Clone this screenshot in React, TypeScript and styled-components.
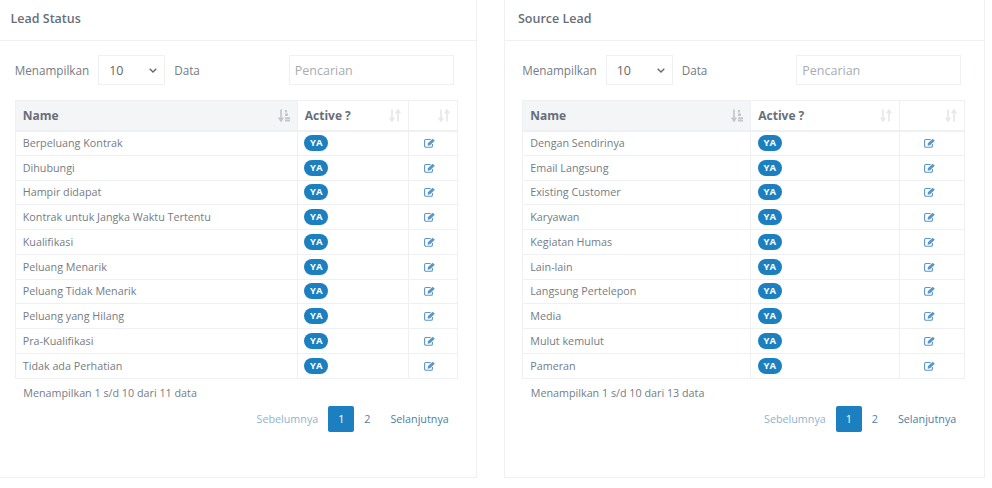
import { createGlobalStyle, styled } from 'styled-components';

const GlobalStyle = createGlobalStyle`
  html, body {
    margin: 0;
    padding: 0;
    background: #fff;
    overflow: hidden;
  }
  body {
    font-family: 'Open Sans', 'Liberation Sans', sans-serif;
    color: #757c84;
  }
`;

type Panel = {
  title: string;
  total: number;
  cols: [number, number, number];
  rows: string[];
};

const panels: Panel[] = [
  {
    title: 'Lead Status',
    total: 11,
    cols: [282, 111, 49],
    rows: [
      'Berpeluang Kontrak',
      'Dihubungi',
      'Hampir didapat',
      'Kontrak untuk Jangka Waktu Tertentu',
      'Kualifikasi',
      'Peluang Menarik',
      'Peluang Tidak Menarik',
      'Peluang yang Hilang',
      'Pra-Kualifikasi',
      'Tidak ada Perhatian',
    ],
  },
  {
    title: 'Source Lead',
    total: 13,
    cols: [228, 149, 65],
    rows: [
      'Dengan Sendirinya',
      'Email Langsung',
      'Existing Customer',
      'Karyawan',
      'Kegiatan Humas',
      'Lain-lain',
      'Langsung Pertelepon',
      'Media',
      'Mulut kemulut',
      'Pameran',
    ],
  },
];

const SortBoth = () => (
  <SortSvg viewBox="0 0 12 13" $muted>
    <path d="M3 .5v10.5M.8 8.6L3 12l2.2-3.4" fill="none" stroke="currentColor" strokeWidth="1.7" />
    <path d="M9 12.5V2M6.8 4.4L9 1l2.2 3.4" fill="none" stroke="currentColor" strokeWidth="1.7" />
  </SortSvg>
);

const SortAsc = () => (
  <SortSvg viewBox="0 0 12 13">
    <path d="M3 .5v10.5M.8 8.6L3 12l2.2-3.4" fill="none" stroke="currentColor" strokeWidth="1.7" />
    <path d="M7 1h2v2.4H7zM7 4.6h3v2.4H7zM7 8.2h5v1.9H7zM7 10.6h5v2H7z" fill="currentColor" />
  </SortSvg>
);

const EditIcon = () => (
  <svg width="12" height="10" viewBox="0 0 12 10">
    <path
      d="M8.4 6v1.9c0 .7-.5 1.3-1.3 1.3H2c-.8 0-1.4-.6-1.4-1.3V2.8c0-.7.6-1.3 1.4-1.3h4.6"
      fill="none"
      stroke="currentColor"
      strokeWidth="1.1"
    />
    <path d="M3.8 5.2L8.7.8l2.1 1.9-4.7 4.6-2.4.4z" fill="currentColor" />
  </svg>
);

const LeadTable = ({ panel }: { panel: Panel }) => (
  <Card>
    <CardHeader>{panel.title}</CardHeader>
    <CardBody>
      <Controls>
        <Length>
          Menampilkan
          <SelectBox>
            10
            <svg width="8" height="5" viewBox="0 0 8 5">
              <path d="M.7.7L4 4l3.3-3.3" fill="none" stroke="#666" strokeWidth="1.3" />
            </svg>
          </SelectBox>
          Data
        </Length>
        <SearchBox>Pencarian</SearchBox>
      </Controls>
      <Table>
        <thead>
          <tr>
            <NameHead $width={panel.cols[0]}>
              <HeadInner>
                Name
                <SortAsc />
              </HeadInner>
            </NameHead>
            <HeadCell $width={panel.cols[1]}>
              <HeadInner>
                Active ?
                <SortBoth />
              </HeadInner>
            </HeadCell>
            <HeadCell $width={panel.cols[2]}>
              <HeadInner>
                <span />
                <SortBoth />
              </HeadInner>
            </HeadCell>
          </tr>
        </thead>
        <tbody>
          {panel.rows.map(name => (
            <tr key={name}>
              <BodyCell>{name}</BodyCell>
              <BadgeCell>
                <Badge>YA</Badge>
              </BadgeCell>
              <ActionCell>
                <EditIcon />
              </ActionCell>
            </tr>
          ))}
        </tbody>
      </Table>
      <Info>Menampilkan 1 s/d 10 dari {panel.total} data</Info>
      <Pagination>
        <PageLink $disabled>Sebelumnya</PageLink>
        <PageCurrent>1</PageCurrent>
        <PageNumber>2</PageNumber>
        <PageLink>Selanjutnya</PageLink>
      </Pagination>
    </CardBody>
  </Card>
);

const App = () => (
  <>
    <GlobalStyle />
    <Page>
      {panels.map(panel => (
        <LeadTable key={panel.title} panel={panel} />
      ))}
    </Page>
  </>
);

export default App;

const Page = styled.div`
  display: grid;
  grid-template-columns: 480px 481px;
  gap: 27.5px;
  width: 992px;
  height: 488px;
  margin: -1px 0 0 -3.5px;
`;

const Card = styled.section`
  height: 479px;
  box-sizing: border-box;
  border: 1px solid #eef0f3;
  background: #fff;
`;

const CardHeader = styled.h2`
  margin: 0;
  height: 41px;
  box-sizing: border-box;
  padding: 10px 0 0 13px;
  border-bottom: 1px solid #eef0f3;
  font-size: 12.5px;
  line-height: 18px;
  font-weight: 600;
  color: #686f77;
`;

const CardBody = styled.div`
  padding: 14px 17.25px 0;
`;

const Controls = styled.div`
  display: flex;
  justify-content: space-between;
  box-sizing: border-box;
  width: 443px;
  height: 45px;
  padding-right: 4px;
`;

const Length = styled.div`
  display: flex;
  align-items: center;
  gap: 9px;
  height: 30px;
  font-size: 11.7px;
`;

const SelectBox = styled.div`
  display: flex;
  align-items: center;
  justify-content: space-between;
  width: 67px;
  height: 30px;
  box-sizing: border-box;
  padding: 0 7px 0 10px;
  border: 1px solid #eef0f3;
  font-size: 12.5px;
  color: #666;
`;

const SearchBox = styled.div`
  display: flex;
  align-items: center;
  width: 165px;
  height: 30px;
  box-sizing: border-box;
  padding-left: 5px;
  border: 1px solid #eef0f3;
  font-size: 12.5px;
  color: #a8acb1;
`;

const Table = styled.table`
  width: 442px;
  border-collapse: collapse;
  table-layout: fixed;
  font-size: 10.75px;
`;

const HeadCell = styled.th<{ $width: number }>`
  width: ${({ $width }) => $width}px;
  height: 30px;
  box-sizing: border-box;
  padding: 0 7px;
  border: 1px solid #eef0f3;
  border-bottom-width: 2px;
  text-align: left;
  font-size: 12px;
  font-weight: 700;
  color: #686f77;
`;

const NameHead = styled(HeadCell)`
  background: #f4f5f7;
`;

const HeadInner = styled.div`
  display: flex;
  align-items: center;
  justify-content: space-between;
`;

const SortSvg = styled.svg<{ $muted?: boolean }>`
  flex: none;
  width: 12px;
  height: 13px;
  color: ${({ $muted }) => ($muted ? '#e6e8ea' : '#c3c6ca')};
`;

const BodyCell = styled.td`
  height: 24.75px;
  box-sizing: border-box;
  padding: 0 7px;
  border: 1px solid #eef0f3;
`;

const BadgeCell = styled(BodyCell)`
  padding-left: 6.5px;
`;

const ActionCell = styled(BodyCell)`
  padding: 0 5px 0 0;
  text-align: center;
  color: #5a96c8;
  line-height: 0;
`;

const Badge = styled.span`
  display: inline-block;
  vertical-align: middle;
  width: 24px;
  height: 16px;
  border-radius: 8px;
  background: #1c7fc0;
  color: #fff;
  font-size: 9.5px;
  font-weight: 700;
  line-height: 16px;
  text-align: center;
`;

const Info = styled.div`
  padding: 6px 0 0 8.5px;
  font-size: 10.75px;
  line-height: 16px;
`;

const Pagination = styled.div`
  display: flex;
  justify-content: flex-end;
  align-items: center;
  gap: 10px;
  width: 434px;
  margin-top: 5px;
  font-size: 10.75px;
`;

const PageLink = styled.span<{ $disabled?: boolean }>`
  color: ${({ $disabled }) => ($disabled ? '#8fb3cf' : '#4a7ea8')};
`;

const PageNumber = styled(PageLink)`
  margin-right: 10px;
`;

const PageCurrent = styled.span`
  display: flex;
  align-items: center;
  justify-content: center;
  width: 26px;
  height: 26px;
  border-radius: 2px;
  background: #1c7fc0;
  color: #fff;
`;
